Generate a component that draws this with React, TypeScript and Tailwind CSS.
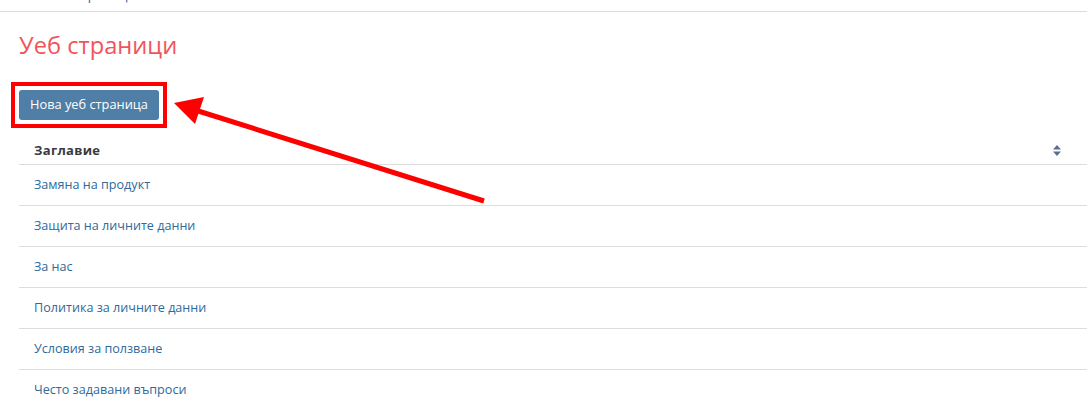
import React from "react";

const pages = [
  "Замяна на продукт",
  "Защита на личните данни",
  "За нас",
  "Политика за личните данни",
  "Условия за ползване",
  "Често задавани въпроси",
];

function SortIcon() {
  return (
    <svg width="8" height="11" viewBox="0 0 8 11" className="text-[#5a6f8f]">
      <path d="M4 0 L8 4.5 L0 4.5 Z M0 6.5 L8 6.5 L4 11 Z" fill="currentColor" />
    </svg>
  );
}

export default function App() {
  return (
    <div className="relative w-[1087px] h-[401px] overflow-hidden bg-white font-['Open_Sans',sans-serif]">
      <div className="h-[11px] overflow-hidden border-b border-[#dcdcdc] box-content">
        <div className="-mt-[14px] pl-[0px] text-[13px] leading-[18px] text-[#2e6a9a]">
          Табло / Уеб страници
        </div>
      </div>

      <div className="pl-[19px]">
        <h1 className="mt-[16px] text-[23.7px] leading-[34px] text-[#f2545b]">Уеб страници</h1>

        <div className="mt-[20px] -ml-[8px] inline-block border-4 border-[#ff0000] p-[4px]">
          <button className="h-[30px] rounded-[3px] bg-[#4f7ea6] px-[11px] text-[12.8px] text-white">
            Нова уеб страница
          </button>
        </div>

        <div className="mt-[9px]">
          <div className="flex h-[28px] items-center justify-between border-b border-[#dddddd] pl-[15px] pr-[26px]">
            <span className="text-[13px] font-bold tracking-[0.3px] text-[#3a3a3a]">Заглавие</span>
            <SortIcon />
          </div>
          {pages.map((p, i) => (
            <div
              key={p}
              className={
                "flex h-[41px] items-center pl-[15px] text-[12.6px] text-[#2e6a9a] " +
                (i < pages.length - 1 ? "border-b border-[#dddddd]" : "")
              }
            >
              {p}
            </div>
          ))}
        </div>
      </div>

      <svg className="pointer-events-none absolute left-0 top-0" width="1087" height="401">
        <line x1="484" y1="201" x2="195" y2="110" stroke="#ff0000" strokeWidth="5" />
        <polygon points="174,103 204,97 195,124" fill="#ff0000" />
      </svg>
    </div>
  );
}
